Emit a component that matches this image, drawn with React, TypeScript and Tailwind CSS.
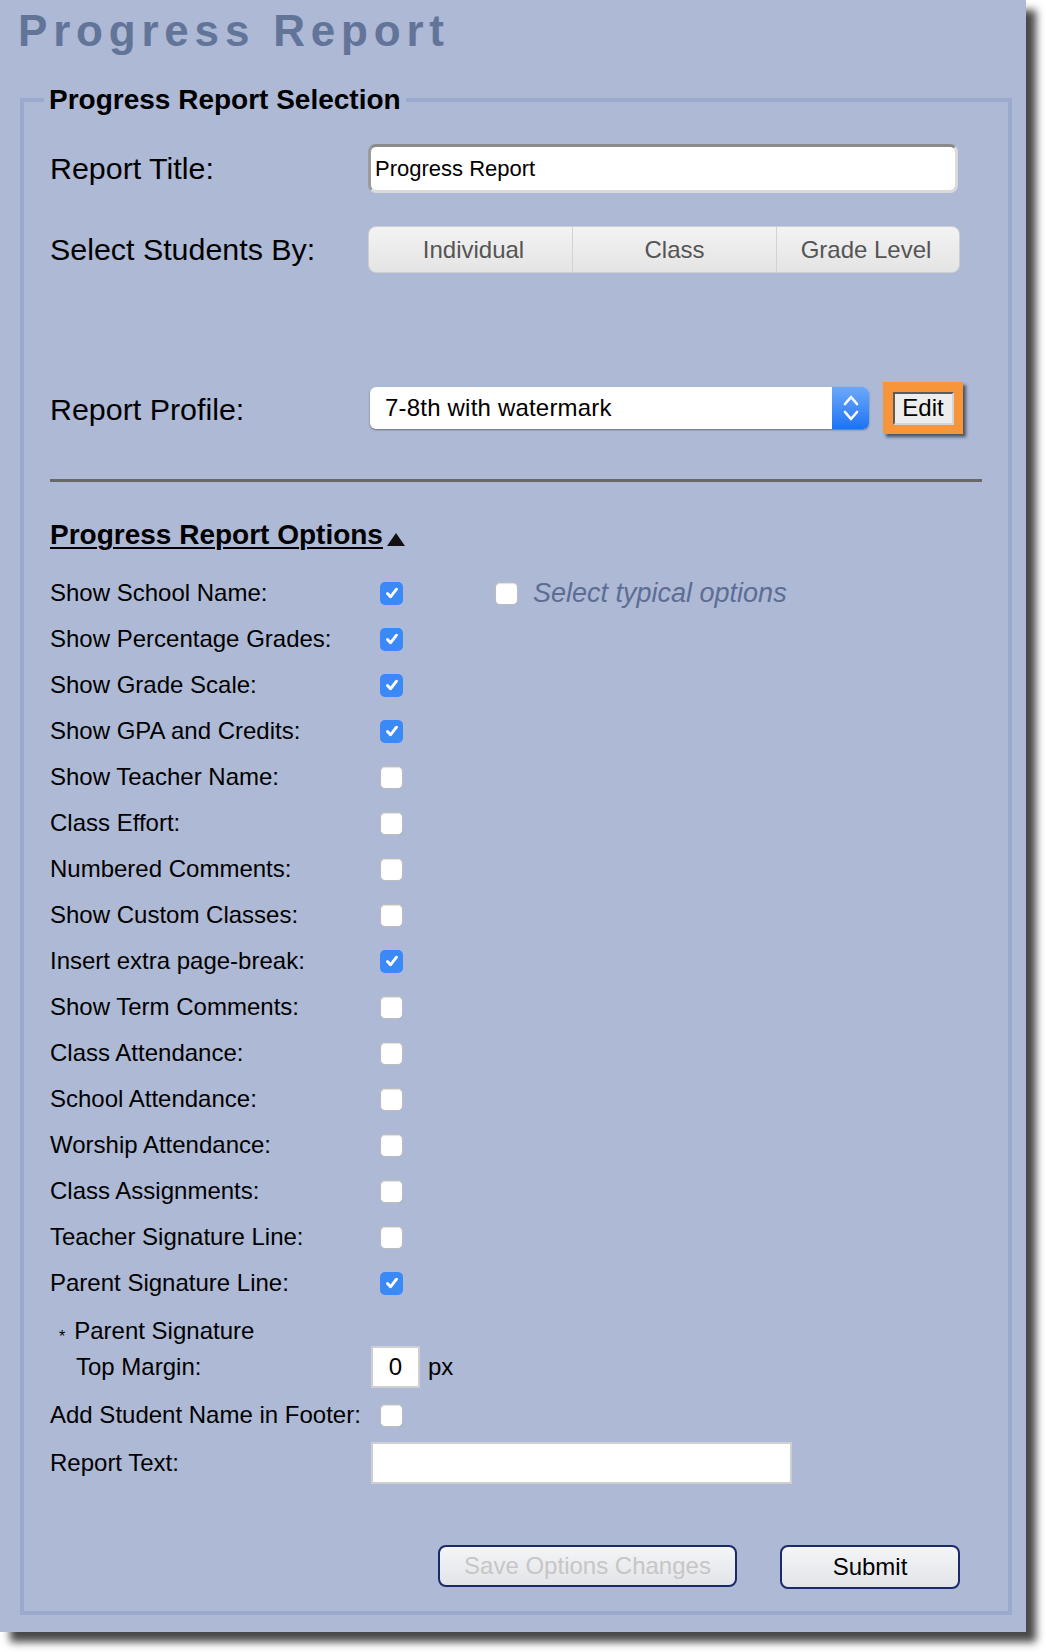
import React from 'react'

const options: [string, boolean][] = [
  ['Show School Name:', true],
  ['Show Percentage Grades:', true],
  ['Show Grade Scale:', true],
  ['Show GPA and Credits:', true],
  ['Show Teacher Name:', false],
  ['Class Effort:', false],
  ['Numbered Comments:', false],
  ['Show Custom Classes:', false],
  ['Insert extra page-break:', true],
  ['Show Term Comments:', false],
  ['Class Attendance:', false],
  ['School Attendance:', false],
  ['Worship Attendance:', false],
  ['Class Assignments:', false],
  ['Teacher Signature Line:', false],
  ['Parent Signature Line:', true],
]

function Check({ on }: { on: boolean }) {
  if (on) {
    return (
      <span className="w-[23px] h-[23px] rounded-[5px] bg-[#3b88f7] flex items-center justify-center flex-shrink-0">
        <svg width="16" height="16" viewBox="0 0 16 16" fill="none">
          <path d="M3.5 8.6l3 3.2 6-7.6" stroke="white" strokeWidth={2.9} strokeLinecap="round" strokeLinejoin="round" />
        </svg>
      </span>
    )
  }
  return (
    <span className="block w-[23px] h-[23px] rounded-[5px] bg-white border border-[#bcbcbc] shadow-[inset_0_1px_1px_rgba(0,0,0,0.12)] flex-shrink-0" />
  )
}

export default function App() {
  return (
    <div className="w-[1046px] h-[1652px] bg-white font-['Liberation_Sans',Arial,sans-serif] text-black">
      <div className="w-[1026px] h-[1632px] bg-[#adb9d5] shadow-[10px_10px_8px_rgba(0,0,0,0.72)] flex flex-col">
        {/* Page title */}
        <div className="h-[84px] pt-[9px] pl-[18px]">
          <h1 className="text-[44px] leading-[44px] font-bold tracking-[5.8px] text-[#637499]">Progress Report</h1>
        </div>

        <fieldset className="ml-[20px] w-[992px] h-[1531px] border-[4px] border-[#9ba9cf] px-[26px]">
          <legend className="ml-[-6px] px-[5px] text-[28px] leading-[32px] font-bold">Progress Report Selection</legend>

          {/* Report title */}
          <div className="mt-[28px] flex items-center h-[49px]">
            <div className="w-[318px] text-[30.4px]">Report Title:</div>
            <div className="w-[590px] h-[49px] bg-white rounded-[8px] border-[3px] border-t-[#8b8b8b] border-l-[#9b9b9b] border-r-[#dadada] border-b-[#dadada] flex items-center pl-[4px] text-[22px]">
              Progress Report
            </div>
          </div>

          {/* Select students by */}
          <div className="mt-[33px] flex items-center h-[47px]">
            <div className="w-[318px] text-[30.4px]">Select Students By:</div>
            <div className="w-[592px] h-[47px] flex rounded-[8px] border border-[#cfcfcf] bg-gradient-to-b from-[#f3f3f3] to-[#e4e4e4] text-[24px] text-[#555] overflow-hidden">
              <div className="w-[204px] pl-[6px] flex items-center justify-center border-r border-[#d2d2d2]">Individual</div>
              <div className="w-[204px] flex items-center justify-center border-r border-[#d2d2d2]">Class</div>
              <div className="flex-1 pr-[4px] flex items-center justify-center">Grade Level</div>
            </div>
          </div>

          {/* Report profile */}
          <div className="mt-[109px] flex items-center h-[52px]">
            <div className="w-[320px] pt-[3px] text-[30.4px]">Report Profile:</div>
            <div className="w-[499px] h-[42px] bg-white rounded-[6px] shadow-[0_1px_2px_rgba(0,0,0,0.4)] flex items-stretch">
              <div className="flex-1 flex items-center pl-[15px] text-[24px] tracking-[0.2px]">7-8th with watermark</div>
              <div className="w-[37px] rounded-r-[6px] bg-gradient-to-b from-[#6ba8fa] to-[#1a72f6] flex items-center justify-center">
                <svg width="18" height="36" viewBox="0 0 18 36" fill="none">
                  <path d="M3 14l6-7 6 7" stroke="white" strokeWidth={2.6} strokeLinecap="round" strokeLinejoin="round" />
                  <path d="M3 22l6 7 6-7" stroke="white" strokeWidth={2.6} strokeLinecap="round" strokeLinejoin="round" />
                </svg>
              </div>
            </div>
            <div className="ml-[14px] w-[80px] h-[52px] bg-[#f7953b] shadow-[3px_3px_3px_rgba(0,0,0,0.55)] flex items-center justify-center">
              <div className="w-[61px] h-[33px] bg-[#ededed] border-[2px] border-t-[#5c5c5c] border-l-[#5c5c5c] border-r-[#d5d5d5] border-b-[#d5d5d5] flex items-center justify-center text-[24px]">
                Edit
              </div>
            </div>
          </div>

          <div className="mt-[45px] h-[3px] bg-[#686868]" />

          {/* Options */}
          <div className="mt-[37px] h-[32px] flex items-center">
            <span className="text-[28px] leading-[32px] font-bold underline underline-offset-[3px] decoration-[1.5px]">Progress Report Options</span>
            <svg className="ml-[4px] mt-[8px]" width="18" height="13" viewBox="0 0 18 13">
              <path d="M9 0L18 13H0z" fill="#111" />
            </svg>
          </div>

          <div className="mt-[19px] text-[24px]">
            {options.map(([label, on], i) => (
              <div key={label} className="h-[46px] flex items-center">
                <div className="w-[330px] whitespace-nowrap">{label}</div>
                <Check on={on} />
                {i === 0 && (
                  <>
                    <span className="ml-[92px]"><Check on={false} /></span>
                    <span className="ml-[15px] italic text-[27px] text-[#5d6d93]">Select typical options</span>
                  </>
                )}
              </div>
            ))}

            <div className="pt-[10px]">
              <div className="h-[29px] leading-[29px] pl-[9px] whitespace-nowrap">
                <span className="text-[16px] align-[-3px] mr-[9px]">*</span>Parent Signature
              </div>
              <div className="mt-[1px] h-[42px] flex items-center">
                <div className="w-[321px] pl-[26px]">Top Margin:</div>
                <div className="w-[49px] h-[42px] bg-white border-2 border-[#cfcfcf] flex items-center justify-center">0</div>
                <span className="ml-[8px]">px</span>
              </div>
            </div>

            <div className="mt-[4px] h-[46px] flex items-center">
              <div className="w-[330px] whitespace-nowrap">Add Student Name in Footer:</div>
              <Check on={false} />
            </div>

            <div className="mt-[4px] h-[42px] flex items-center">
              <div className="w-[321px]">Report Text:</div>
              <div className="w-[421px] h-[42px] bg-white border-2 border-[#cfcfcf]" />
            </div>
          </div>

          {/* Buttons */}
          <div className="mt-[61px] flex justify-end items-start gap-[43px] pr-[22px]">
            <button className="w-[299px] h-[42px] rounded-[8px] border-2 border-[#1b2a6b] bg-gradient-to-b from-[#f4f5f7] to-[#e3e4e8] text-[24px] text-[#c6c6c6]">
              Save Options Changes
            </button>
            <button className="w-[180px] h-[44px] rounded-[8px] border-2 border-[#1b2a6b] bg-gradient-to-b from-[#f4f5f7] to-[#e3e4e8] text-[24px] text-black">
              Submit
            </button>
          </div>
        </fieldset>
      </div>
    </div>
  )
}
